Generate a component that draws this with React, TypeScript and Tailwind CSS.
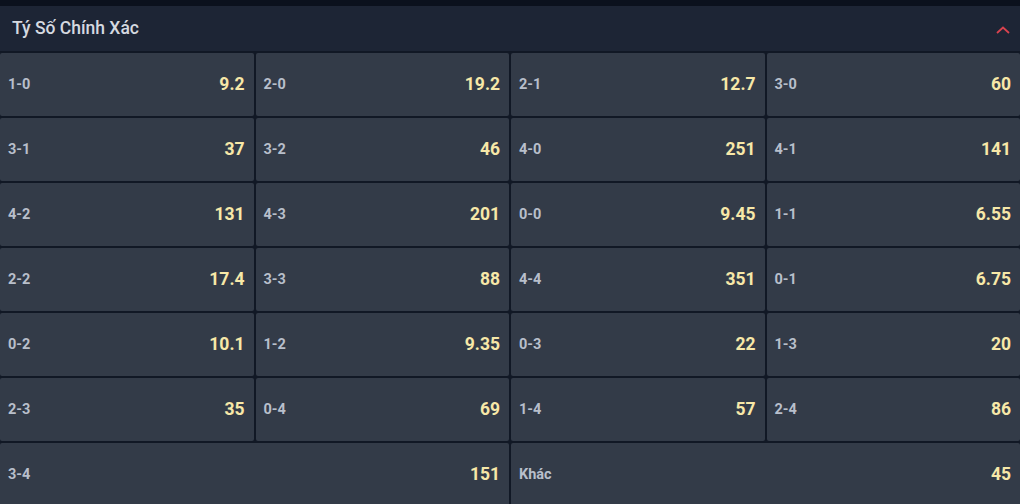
import React from "react";

const cells: [string, string][] = [
  ["1-0", "9.2"], ["2-0", "19.2"], ["2-1", "12.7"], ["3-0", "60"],
  ["3-1", "37"], ["3-2", "46"], ["4-0", "251"], ["4-1", "141"],
  ["4-2", "131"], ["4-3", "201"], ["0-0", "9.45"], ["1-1", "6.55"],
  ["2-2", "17.4"], ["3-3", "88"], ["4-4", "351"], ["0-1", "6.75"],
  ["0-2", "10.1"], ["1-2", "9.35"], ["0-3", "22"], ["1-3", "20"],
  ["2-3", "35"], ["0-4", "69"], ["1-4", "57"], ["2-4", "86"],
];

function Cell({ label, value, wide }: { label: string; value: string; wide?: boolean }) {
  return (
    <div
      className={`flex h-[63px] items-center justify-between rounded-[2px] bg-[#333b48] pl-2 pr-[9px] ${wide ? "col-span-2" : ""}`}
    >
      <span className="text-[14.5px] font-bold text-[#b8bfcb]">{label}</span>
      <span className="text-[17.5px] font-bold text-[#f7e8a8]">{value}</span>
    </div>
  );
}

export default function App() {
  return (
    <div className="h-[504px] w-[1020px] overflow-hidden bg-[#111825]" style={{ fontFamily: "Roboto, 'Noto Sans', sans-serif" }}>
      <div className="h-[6px] bg-[#0b111d]" />
      <div className="flex h-[45px] items-center justify-between bg-[#1d2535] pl-3 pr-[8px]">
        <span className="text-[17.5px] font-medium text-[#d5d9e0]">Tý Số Chính Xác</span>
        <svg width="16" height="10" viewBox="0 0 16 10" className="mr-[1px] mt-[2px]">
          <path d="M2 8 L8 2.5 L14 8" fill="none" stroke="#d9434f" strokeWidth="1.8" />
        </svg>
      </div>
      <div className="mt-[2px] grid grid-cols-4 gap-[2px]">
        {cells.map(([l, v]) => (
          <Cell key={l} label={l} value={v} />
        ))}
        <Cell label="3-4" value="151" wide />
        <Cell label="Khác" value="45" wide />
      </div>
    </div>
  );
}
